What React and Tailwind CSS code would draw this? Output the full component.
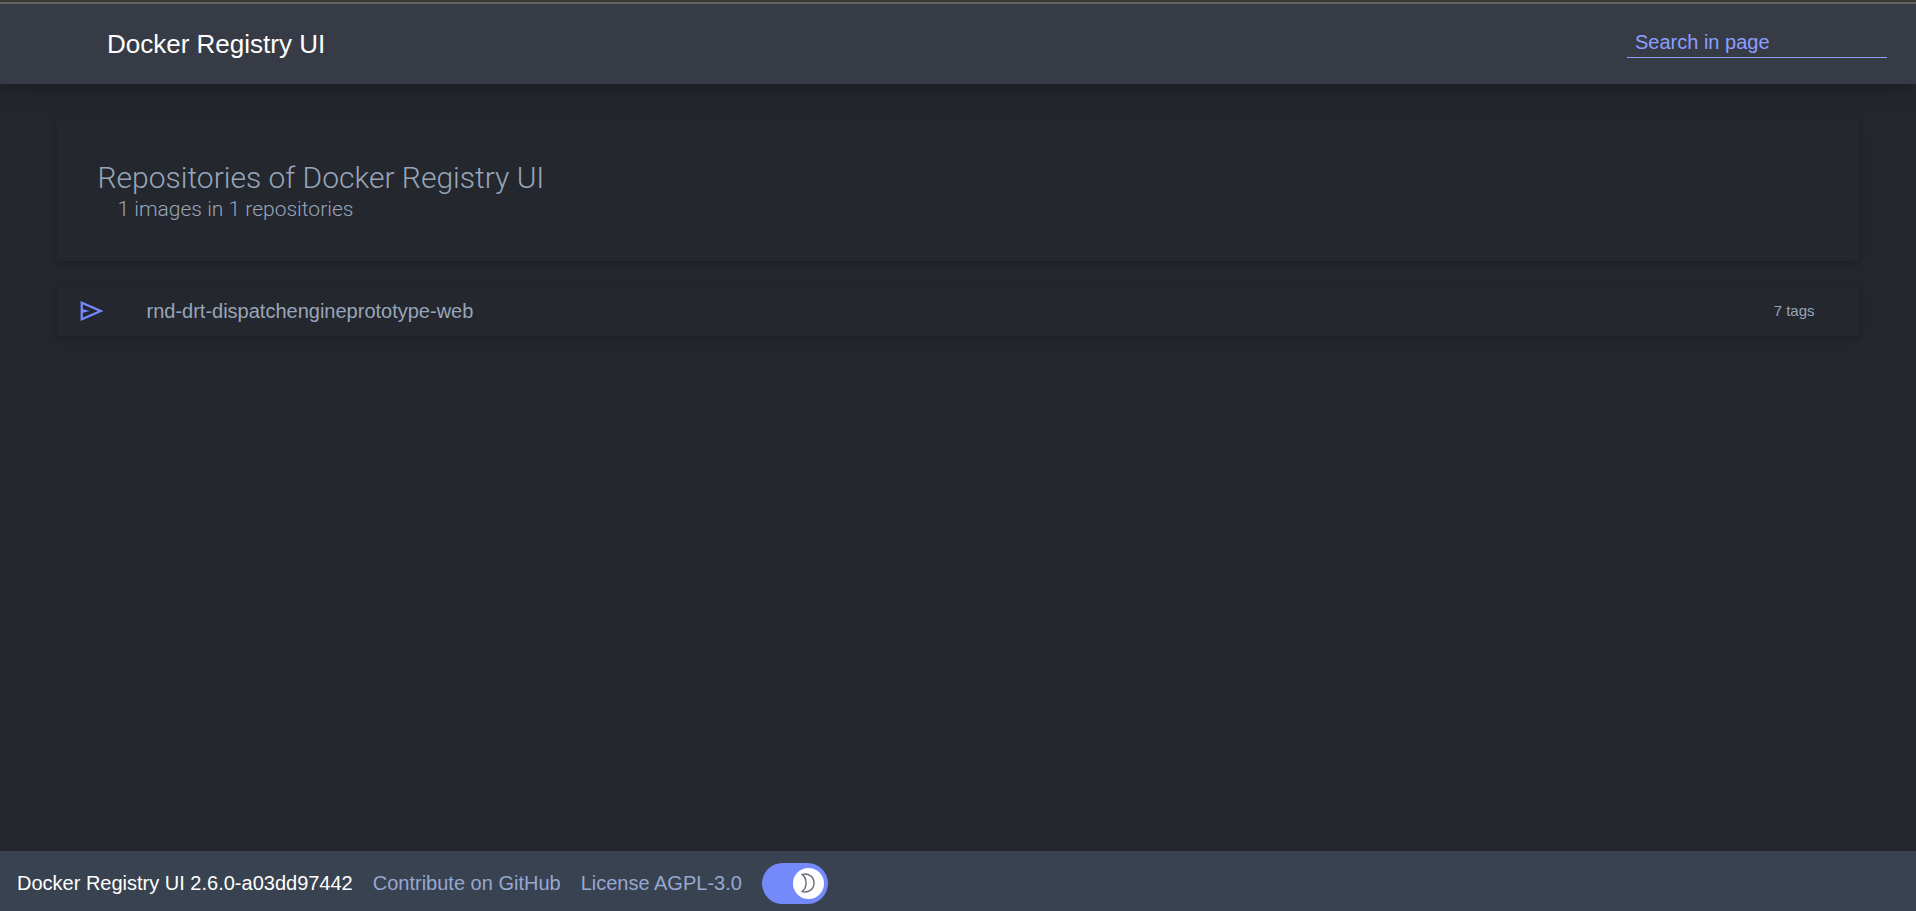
import React, { useState } from "react";

const repositories = [{ name: "rnd-drt-dispatchengineprototype-web", tags: 7 }];

const links = [
  { label: "Contribute on GitHub", href: "#github" },
  { label: "License AGPL-3.0", href: "#license" },
];

function SendIcon() {
  return (
    <svg viewBox="0 0 24 20" className="w-6 h-5 shrink-0" aria-hidden="true">
      <path
        fill="#7489ff"
        fillRule="evenodd"
        d="M0.6 0L23.6 10L0.6 20ZM2.9 3.4V8.2L9.8 10L2.9 11.8V16.6L18 10Z"
      />
    </svg>
  );
}

function MoonIcon() {
  return (
    <svg viewBox="0 0 14 20" className="w-3.5 h-5" aria-hidden="true">
      <path
        fill="none"
        stroke="#6b6b76"
        strokeWidth="1.4"
        strokeLinejoin="round"
        d="M1 1.4C8 -0.2 13 4 13 10C13 16 8 20.2 1 18.6C6.4 14.6 6.4 5.4 1 1.4Z"
      />
    </svg>
  );
}

function ThemeSwitch({ dark, onChange }) {
  return (
    <label className="relative block w-[66px] h-[41px] rounded-full bg-[#7489fa] cursor-pointer">
      <input
        type="checkbox"
        aria-label="Dark theme"
        className="peer sr-only"
        checked={dark}
        onChange={(e) => onChange(e.target.checked)}
      />
      <span className="absolute top-[5px] left-1 peer-checked:left-[31px] flex items-center justify-center w-[31px] h-[31px] rounded-full bg-white transition-all">
        <MoonIcon />
      </span>
    </label>
  );
}

export default function App() {
  const [search, setSearch] = useState("");
  const [dark, setDark] = useState(true);

  const visible = repositories.filter((r) =>
    r.name.toLowerCase().includes(search.toLowerCase()),
  );

  return (
    <div className="min-h-screen flex flex-col bg-[#24272e] text-[#98a5b9] font-['Liberation_Sans',Arial,sans-serif]">
      <header className="border-t-2 border-[#383836] shadow-[0_5px_6px_rgba(0,0,0,0.06),0_8px_25px_rgba(0,0,0,0.16)]">
        <div className="flex items-center justify-between h-[82px] pl-[107px] pr-[29px] border-t-2 border-[#646461] bg-[#373b45]">
          <a href="#" className="text-[26px] leading-8 text-white">
            Docker Registry UI
          </a>
          <input
            type="text"
            aria-label="Search in page"
            placeholder="Search in page"
            value={search}
            onChange={(e) => setSearch(e.target.value)}
            className="w-[260px] h-[30px] mb-0.5 px-2 text-xl leading-6 text-[#8c9eff] placeholder:text-[#8c9eff] border-b border-[#8c9eff] bg-transparent outline-none"
          />
        </div>
      </header>

      <main className="grow flex flex-col gap-[25px] w-[94%] mx-auto py-[35px]">
        <section className="px-10 py-10 font-['Roboto',sans-serif] font-light bg-[#24272e] shadow-[0_3px_6px_rgba(0,0,0,0.12),0_3px_13px_rgba(0,0,0,0.1)]">
          <h2 className="text-[30px] leading-[38px]">Repositories of Docker Registry UI</h2>
          <p className="pl-5 text-[21px] leading-6">
            {visible.length} images in {visible.length} repositories
          </p>
        </section>

        {visible.map((repo) => (
          <a
            key={repo.name}
            href={`#${repo.name}`}
            className="flex items-center h-[50px] pl-[23px] pr-11 bg-[#24272e] shadow-[0_3px_6px_rgba(0,0,0,0.12),0_3px_13px_rgba(0,0,0,0.1)]"
          >
            <SendIcon />
            <span className="grow pl-[42px] text-xl">{repo.name}</span>
            <span className="text-[15px]">{repo.tags} tags</span>
          </a>
        ))}
      </main>

      <footer className="flex items-center gap-5 h-[60px] px-[17px] pt-1 text-xl bg-[#394250]">
        <span className="text-white">Docker Registry UI 2.6.0-a03dd97442</span>
        {links.map((link) => (
          <a key={link.label} href={link.href} className="text-[#96a8d0]">
            {link.label}
          </a>
        ))}
        <ThemeSwitch dark={dark} onChange={setDark} />
      </footer>
    </div>
  );
}
